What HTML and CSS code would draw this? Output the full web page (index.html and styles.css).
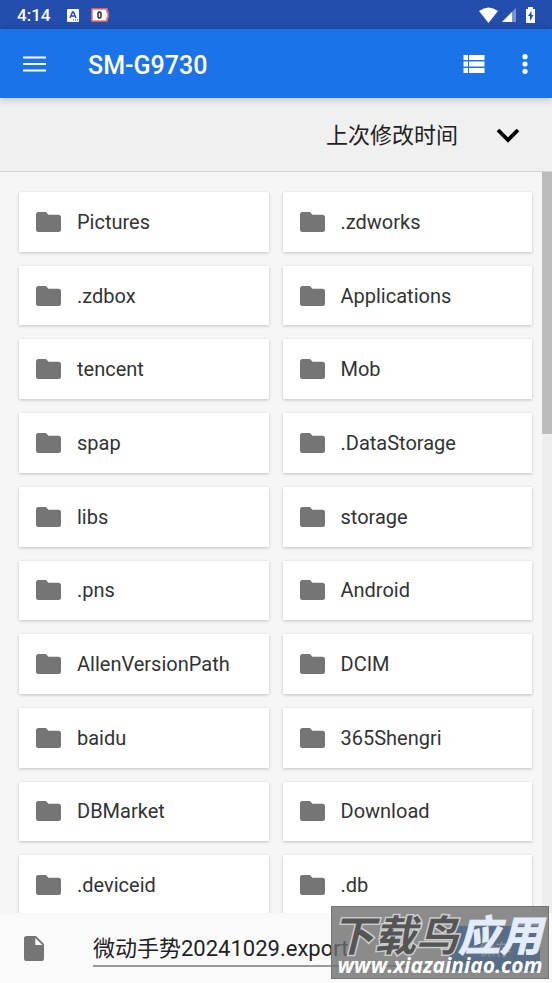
FILE: index.html
```html
<!DOCTYPE html>
<html lang="zh-CN">
<head>
<meta charset="utf-8">
<meta name="viewport" content="width=device-width, initial-scale=1">
<title>SM-G9730</title>
<link rel="stylesheet" href="styles.css">
</head>
<body>
<div class="status">
  <span class="clock">4:14</span>
  <svg class="status-a" width="12" height="14" viewBox="0 0 12 14"><rect y="1" width="12" height="13" rx="1" fill="#fff"/><path d="M3 10 5.500 4h1L9 10M4 8h4" fill="none" stroke="#244eae" stroke-width="1.500"/><path d="M6 12h1m1 0h1m1 0h1" stroke="#244eae"/></svg>
  <svg class="status-zero" width="18" height="14" viewBox="0 0 18 14"><path d="M1 1h15v3h1v6h-1v3H1z" fill="#fff" stroke="#ee7468" stroke-width="1.500"/><rect x="7" y="4" width="3" height="6" rx="1.300" fill="none" stroke="#222" stroke-width="1.400"/></svg>
  <span class="spacer"></span>
  <svg width="20" height="16" viewBox="0 0 20 16"><path d="M0 4Q9.500-3 19 4L9.500 16z" fill="#fff"/></svg>
  <svg class="signal" width="14" height="14" viewBox="0 0 14 14"><path d="M0 14 14 0v14z" fill="#fff" opacity=".4"/><path d="M0 14 10 4v10z" fill="#fff"/></svg>
  <svg class="battery" width="9" height="16" viewBox="0 0 9 16"><path d="M2 0h5v2h2v14H0V2h2z" fill="#fff"/><path d="M5.500 4 2 9h2v5l3.500-6h-2z" fill="#244eae"/></svg>
</div>
<header class="appbar">
  <button class="icon-btn" aria-label="菜单"><svg width="24" height="18" viewBox="0 0 24 18"><path d="M1 2.500h23M1 9h23M1 15.500h23" stroke="#fff" stroke-width="2.200"/></svg></button>
  <h1>SM-G9730</h1>
  <button class="icon-btn" aria-label="列表视图"><svg width="22" height="18" viewBox="0 0 22 18"><path d="M0.500 0h4.500v5H.5zM6 0h15.500v5H6zM.5 6.500h4.500v5H.5zM6 6.500h15.500v5H6zM.5 13h4.500v5H.5zM6 13h15.500v5H6z" fill="#fff"/></svg></button>
  <button class="icon-btn more" aria-label="更多"><svg width="6" height="20" viewBox="0 0 6 20"><g fill="#fff"><circle cx="3" cy="2.700" r="2.600"/><circle cx="3" cy="10" r="2.600"/><circle cx="3" cy="17.300" r="2.600"/></g></svg></button>
</header>
<div class="sort">
  <button class="sort-btn"><span>上次修改时间</span><svg width="24" height="16" viewBox="0 0 24 16"><path d="m2 3 10 10L22 3" fill="none" stroke="#000" stroke-width="3.800"/></svg></button>
</div>
<svg class="defs" width="0" height="0" aria-hidden="true"><symbol id="folder" viewBox="0 0 25 20"><path d="M2.500 0H10l2.500 2.700h10A2.500 2.500 0 0 1 25 5.200v12.300a2.500 2.500 0 0 1-2.500 2.500h-20A2.500 2.500 0 0 1 0 17.500v-15A2.500 2.500 0 0 1 2.500 0z" fill="#757575"/></symbol></svg>
<main class="pane">
  <div class="files">
    <button class="card"><svg><use href="#folder"/></svg>Pictures</button>
    <button class="card"><svg><use href="#folder"/></svg>.zdworks</button>
    <button class="card"><svg><use href="#folder"/></svg>.zdbox</button>
    <button class="card"><svg><use href="#folder"/></svg>Applications</button>
    <button class="card"><svg><use href="#folder"/></svg>tencent</button>
    <button class="card"><svg><use href="#folder"/></svg>Mob</button>
    <button class="card"><svg><use href="#folder"/></svg>spap</button>
    <button class="card"><svg><use href="#folder"/></svg>.DataStorage</button>
    <button class="card"><svg><use href="#folder"/></svg>libs</button>
    <button class="card"><svg><use href="#folder"/></svg>storage</button>
    <button class="card"><svg><use href="#folder"/></svg>.pns</button>
    <button class="card"><svg><use href="#folder"/></svg>Android</button>
    <button class="card"><svg><use href="#folder"/></svg>AllenVersionPath</button>
    <button class="card"><svg><use href="#folder"/></svg>DCIM</button>
    <button class="card"><svg><use href="#folder"/></svg>baidu</button>
    <button class="card"><svg><use href="#folder"/></svg>365Shengri</button>
    <button class="card"><svg><use href="#folder"/></svg>DBMarket</button>
    <button class="card"><svg><use href="#folder"/></svg>Download</button>
    <button class="card"><svg><use href="#folder"/></svg>.deviceid</button>
    <button class="card"><svg><use href="#folder"/></svg>.db</button>
  </div>
  <div class="track"><div class="thumb"></div></div>
</main>
<footer class="savebar">
  <svg width="20" height="25" viewBox="0 0 20 25"><path d="M2.500 0H12l8 8v14.500a2.500 2.500 0 0 1-2.500 2.500h-15A2.500 2.500 0 0 1 0 22.500v-20A2.500 2.500 0 0 1 2.500 0z" fill="#757575"/><path d="M11.300 2v7h7z" fill="#fafafa"/></svg>
  <input class="name" type="text" aria-label="文件名" value="微动手势20241029.export">
  <button class="save">保存</button>
  <div class="watermark"><p class="brand"><span>下载鸟</span><span class="light">应用</span></p><p class="url">www.xiazainiao.com</p></div>
</footer>
</body>
</html>
```
FILE: styles.css
```css
* { box-sizing: border-box; }
body {
  margin: 0;
  height: 100vh;
  display: flex;
  flex-direction: column;
  overflow: hidden;
  font-family: Roboto, "Noto Sans CJK SC", sans-serif;
  background: #f6f6f6;
  color: #333;
}
button, input { font: inherit; color: inherit; border: 0; padding: 0; margin: 0; background: none; }
svg { flex: none; display: block; }
h1, p { margin: 0; }
.defs { position: absolute; }

.status { flex: none; height: 29px; display: flex; align-items: center; padding: 0 17px; background: #244eae; color: #fff; }
.clock { font-size: 17px; font-weight: 500; line-height: 20px; }
.status-a { margin-left: 17px; }
.status-zero { margin-left: 12px; }
.spacer { flex: 1; }
.signal { margin-left: 3px; }
.battery { margin-left: 10px; }

.appbar { flex: none; height: 69px; display: flex; align-items: center; padding: 0 24px 0 22px; background: #1a73e8; color: #fff; position: relative; box-shadow: 0 1px 8px rgba(0, 0, 0, .25); }
.appbar h1 { flex: 1; margin-left: 42px; padding-top: 4px; font-size: 25px; font-weight: 500; line-height: 30px; }
.more { margin-left: 37px; }

.sort { flex: none; height: 74px; display: flex; align-items: center; justify-content: flex-end; padding: 0 32px; background: #f0f0f0; border-bottom: 1px solid #d2d2d2; }
.sort-btn { display: flex; align-items: center; gap: 38px; font-family: "Noto Sans CJK SC", sans-serif; font-size: 22px; line-height: 32px; color: #222; }
.sort-btn span { padding-bottom: 4px; }

.pane { flex: 1; min-height: 0; display: flex; overflow: hidden; }
.files { flex: 1; display: grid; grid-template-columns: 1fr 1fr; grid-auto-rows: 1fr; gap: 14px; margin: 20px 10px -2px 19px; }
.card { display: flex; align-items: center; gap: 16px; min-width: 0; min-height: 0; padding: 0 17px; background: #fff; font-size: 20px; line-height: 24px; text-align: left; box-shadow: 0 1px 3px rgba(0, 0, 0, .22); }
.card svg { width: 25px; height: 20px; }
.track { width: 10px; background: #eee; }
.thumb { height: 262px; background: #bcbcbc; }

.savebar { flex: none; height: 70px; display: flex; align-items: center; position: relative; padding: 0 12px 0 24px; background: #fafafa; }
.name { flex: 1; min-width: 0; height: 38px; margin: 0 22px 0 49px; padding-bottom: 2px; border-bottom: 2px solid #999; font-size: 22px; line-height: 32px; color: #222; }
.save { width: 90px; height: 45px; background: #1a73e8; border-radius: 4px; color: #fff; font-size: 16px; }
.watermark { position: absolute; right: 3px; bottom: 4px; width: 218px; height: 73px; padding-top: 4px; background: rgba(108, 108, 108, .78); border: 1px solid #757575; text-align: center; white-space: nowrap; font-style: italic; }
.brand { padding-right: 10px; font-family: "Noto Sans CJK SC", sans-serif; font-size: 42px; font-weight: 700; line-height: 44px; color: #555; -webkit-text-stroke: 3px #ccc; paint-order: stroke fill; }
.light { color: #e3edff; -webkit-text-stroke: 1px #e3edff; }
.url { font-family: "Open Sans", sans-serif; font-size: 21px; font-weight: 700; line-height: 20px; color: #fff; }
```
